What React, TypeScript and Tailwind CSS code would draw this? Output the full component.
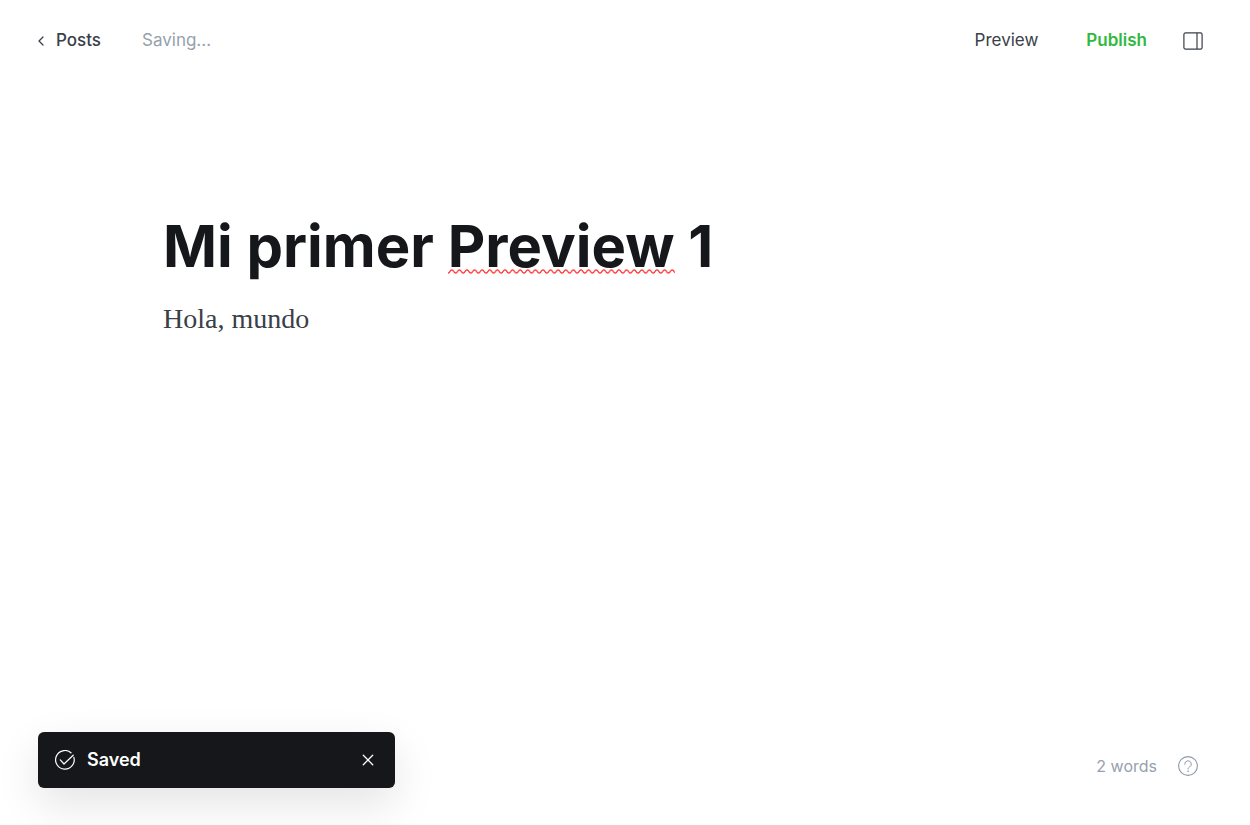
import { useState } from "react";

function ChevronLeftIcon() {
  return (
    <svg width="6" height="10" viewBox="0 0 6 10" fill="none" stroke="#394047" strokeWidth="1.3" strokeLinecap="round" strokeLinejoin="round" aria-hidden="true">
      <path d="M5 1 1 5l4 4" />
    </svg>
  );
}

function SidebarIcon() {
  return (
    <svg width="20" height="18" viewBox="0 0 20 18" fill="none" stroke="#394047" strokeWidth="1.2" aria-hidden="true">
      <rect x="0.9" y="0.9" width="18.2" height="16.2" rx="1.6" />
      <path d="M14 1v16" />
    </svg>
  );
}

function CheckCircleIcon() {
  return (
    <svg width="20" height="20" viewBox="0 0 20 20" fill="none" stroke="#ffffff" strokeWidth="1.2" strokeLinecap="round" strokeLinejoin="round" aria-hidden="true">
      <path d="M16 2.8A9.3 9.3 0 1 0 18.9 7.4" />
      <path d="M5.3 9.9 9 14 18.2 5.2" />
    </svg>
  );
}

function CloseIcon() {
  return (
    <svg width="12" height="12" viewBox="0 0 12 12" fill="none" stroke="#ffffff" strokeWidth="1.3" strokeLinecap="round" aria-hidden="true">
      <path d="m1.3 1.3 9.4 9.4M10.7 1.3 1.3 10.7" />
    </svg>
  );
}

function HelpIcon() {
  return (
    <svg width="20" height="20" viewBox="0 0 20 20" fill="none" stroke="#8f9ba8" strokeLinecap="round" strokeLinejoin="round" aria-hidden="true">
      <circle cx="10" cy="10" r="9.4" strokeWidth="1.1" />
      <path d="M6.7 8.2a3.3 3.3 0 1 1 4.9 2.8c-1 .6-1.6 1-1.6 2.1" />
      <circle cx="10" cy="15.2" r="0.4" fill="#8f9ba8" strokeWidth="0.6" />
    </svg>
  );
}

function SpellingWave() {
  return (
    <svg className="absolute bottom-0 left-0 h-[5px] w-full" aria-hidden="true">
      <defs>
        <pattern id="spelling-wave" width="7.6" height="5" patternUnits="userSpaceOnUse">
          <path d="M-3.8 4.2C-1.9 4.2-1.9.8 0 .8S1.9 4.2 3.8 4.2 5.7.8 7.6.8 9.5 4.2 11.4 4.2" transform="translate(-3.8 0)" fill="none" stroke="#ff1a1a" strokeWidth="1.2" />
          <path d="M3.8 4.2C5.7 4.2 5.7.8 7.6.8" fill="none" stroke="none" />
        </pattern>
      </defs>
      <rect width="100%" height="5" fill="url(#spelling-wave)" />
    </svg>
  );
}

export default function App() {
  const [showToast, setShowToast] = useState(true);

  return (
    <div className="flex min-h-screen flex-col bg-white font-['Inter',sans-serif] text-[#394047]">
      <header className="flex items-center justify-between py-7 pr-[47px] pl-[38px] text-[17px] leading-6">
        <div className="flex items-center gap-[41px]">
          <a href="#posts" className="flex items-center gap-3 font-medium">
            <span className="pt-0.5">
              <ChevronLeftIcon />
            </span>
            Posts
          </a>
          <span className="text-[#95a1ad]">Saving...</span>
        </div>
        <div className="flex items-center">
          <button type="button" className="mr-12">Preview</button>
          <button type="button" className="mr-9 font-semibold text-[#30b940]">Publish</button>
          <button type="button" aria-label="Settings" className="flex pt-0.5">
            <SidebarIcon />
          </button>
        </div>
      </header>

      <main className="mx-auto w-full max-w-[924px] flex-1 pt-[134px]">
        <h1
          contentEditable
          suppressContentEditableWarning
          spellCheck={false}
          aria-label="Post title"
          className="text-[58px] leading-[64px] font-bold text-[#15171a] outline-none"
        >
          Mi primer{" "}
          <span className="relative inline-block h-[60px]">
            Preview
            <SpellingWave />
          </span>{" "}
          1
        </h1>
        <p
          contentEditable
          suppressContentEditableWarning
          spellCheck={false}
          aria-label="Post body"
          className="mt-5 font-['Liberation_Serif',serif] text-[28px] leading-[42px] outline-none"
        >
          Hola, mundo
        </p>
      </main>

      <footer className="flex items-end justify-between pr-[52px] pb-[37px] pl-[38px]">
        <div className="min-h-14">
          {showToast && (
            <div role="status" className="flex h-14 w-[357px] items-center rounded-md bg-[#15171a] pr-[21px] pl-[17px] shadow-[0_16px_44px_rgba(0,0,0,0.11)]">
              <CheckCircleIcon />
              <span className="ml-3 flex-1 text-[18px] leading-6 font-semibold text-white">Saved</span>
              <button type="button" aria-label="Close" onClick={() => setShowToast(false)} className="flex">
                <CloseIcon />
              </button>
            </div>
          )}
        </div>
        <div className="mb-2.5 flex items-center gap-[21px] text-[16px] leading-6 text-[#95a1ad]">
          <span>2 words</span>
          <a href="#help" aria-label="Help" className="flex">
            <HelpIcon />
          </a>
        </div>
      </footer>
    </div>
  );
}
